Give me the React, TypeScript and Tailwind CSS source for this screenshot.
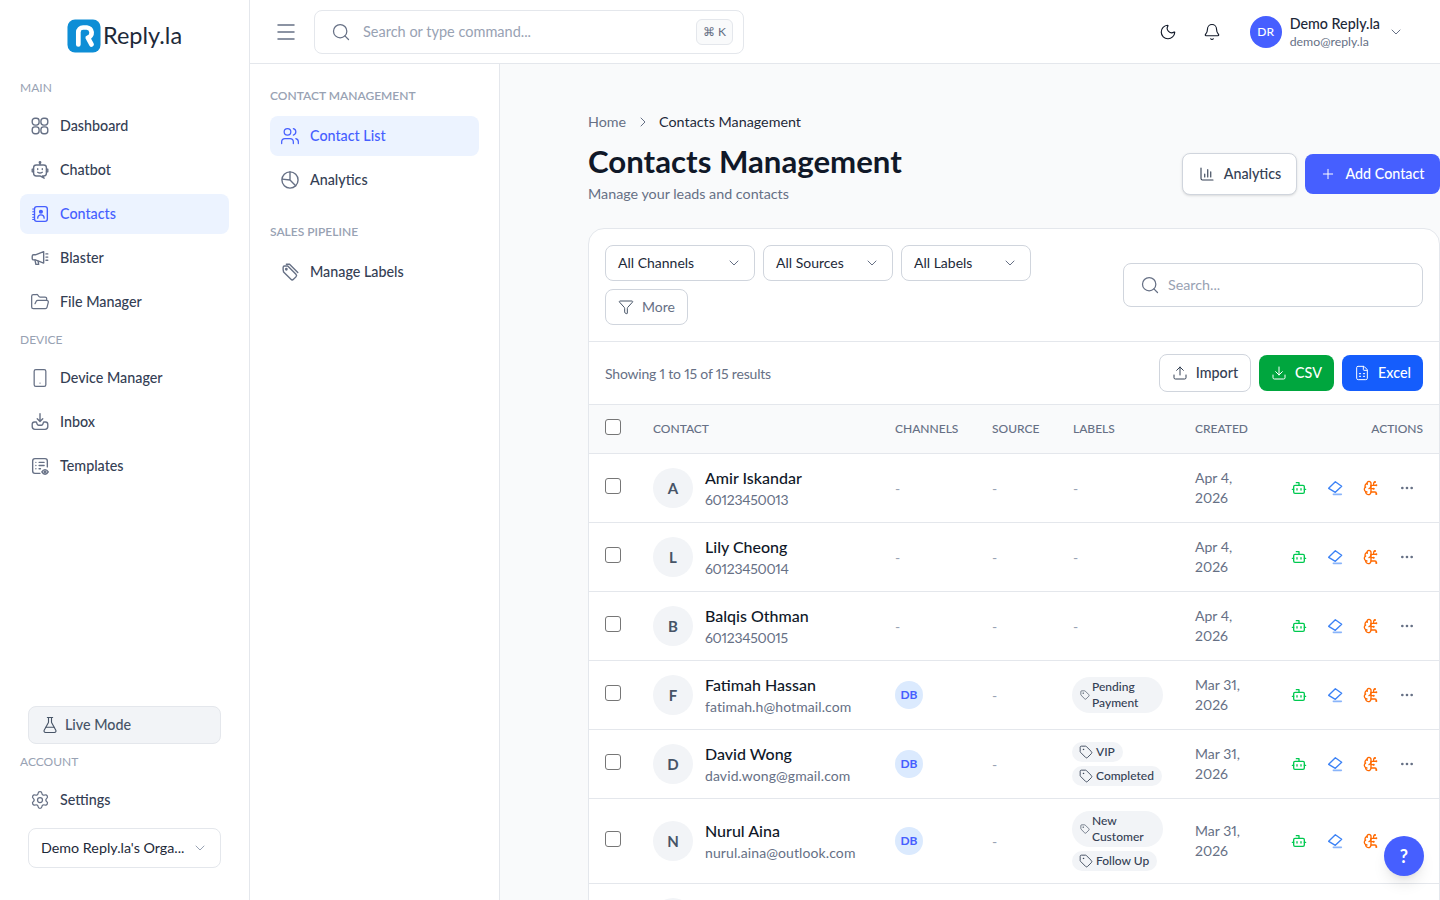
import React from "react";
import {
  Bell, ChevronDown, ChevronRight, Download, Ellipsis, FlaskConical, FolderOpen, Funnel, Menu, Moon, Plus, Search, Settings, Smartphone, Tag, Upload, Users, BrainCircuit, Bot, FileSpreadsheet,
} from "lucide-react";

const Svg = ({ children, className = "" }: { children: React.ReactNode; className?: string }) => (
  <svg viewBox="0 0 24 24" fill="none" stroke="currentColor" strokeWidth="1.5" strokeLinecap="round" strokeLinejoin="round" className={className}>{children}</svg>
);

const DashIcon = (p: { className?: string }) => (
  <Svg {...p}><rect x="3.500" y="3.500" width="7.500" height="7.500" rx="3" /><rect x="13" y="3.500" width="7.500" height="7.500" rx="3" /><rect x="3.500" y="13" width="7.500" height="7.500" rx="3" /><rect x="13" y="13" width="7.500" height="7.500" rx="3" /></Svg>
);
const ChatbotIcon = (p: { className?: string }) => (
  <Svg {...p}><path d="M12 4v2" /><circle cx="12" cy="3.800" r=".8" /><path d="M8 6.500h8a3 3 0 0 1 3 3v6a3 3 0 0 1-3 3h-1.500l2 2.500-4.500-2.500H8a3 3 0 0 1-3-3v-6a3 3 0 0 1 3-3Z" /><path d="M5 11H3.500v3H5M19 11h1.500v3H19" /><path d="M9.500 10.500v1M14.500 10.500v1M9.500 14.500c1.500 1 3.500 1 5 0" /></Svg>
);
const ContactsIcon = (p: { className?: string }) => (
  <Svg {...p}><rect x="6" y="4" width="14" height="16" rx="2.500" /><circle cx="13" cy="9.500" r="1.500" fill="currentColor" /><path d="M9.500 16.500c0-2.200 1.500-3.500 3.500-3.500s3.500 1.300 3.500 3.500" /><path d="M4 6.500h2M4 9.500h2M4 12.500h2M4 15.500h2M4 18h2" strokeWidth="1.200" /></Svg>
);
const BlasterIcon = (p: { className?: string }) => (
  <Svg {...p}><path d="M16 5 7 8.500H5a1.500 1.500 0 0 0-1.500 1.500v2.500A1.500 1.500 0 0 0 5 14h2l9 3.500V5Z" /><path d="M6.500 14l1 5h3l-.5-3.500" /><path d="M18.500 7.500h2M18.500 11h2M18.500 14.500h2" /></Svg>
);
const InboxIcon = (p: { className?: string }) => (
  <Svg {...p}><path d="M12 3v8M9 8.500l3 3 3-3" /><path d="M8 12H6a2.500 2.500 0 0 0-2.500 2.500V17A3 3 0 0 0 6.500 20h11a3 3 0 0 0 3-3v-2.500A2.500 2.500 0 0 0 18 12h-2l-1 2.500a1.500 1.500 0 0 1-1.400 1h-3.200a1.500 1.500 0 0 1-1.400-1L8 12Z" /></Svg>
);
const TemplatesIcon = (p: { className?: string }) => (
  <Svg {...p}><path d="M12 20H6.500A2.500 2.500 0 0 1 4 17.500v-11A2.500 2.500 0 0 1 6.500 4h11A2.500 2.500 0 0 1 20 6.500V13" /><path d="M7.500 8h.01M7.500 11.500h.01M7.500 15h.01M11 8h5.500M11 11.500h5.500M11 15h1.500" /><path d="M14 18.500c1-1.800 2.300-2.500 3.500-2.500s2.500.7 3.500 2.500c-1 1.800-2.300 2.500-3.500 2.500s-2.500-.7-3.500-2.500Z" /><circle cx="17.500" cy="18.500" r="1" /></Svg>
);
const LabelsIcon = (p: { className?: string }) => (
  <Svg {...p}><path d="M4.500 9.500V7a1.500 1.500 0 0 1 1.500-1.500h3.500l9 9a2 2 0 0 1 0 2.800l-2.700 2.700a2 2 0 0 1-2.800 0l-8-8Z" /><path d="M8 3.500h3.500l9 9" /><circle cx="8" cy="9" r=".8" /></Svg>
);
const PieIcon = (p: { className?: string }) => (
  <Svg {...p}><circle cx="12" cy="12" r="8.800" /><path d="M12 3.200V12L3.600 11M12 12l6.200 6.200" /></Svg>
);
const ChartAxesIcon = (p: { className?: string }) => (
  <Svg {...p}><path d="M4 4v14a2 2 0 0 0 2 2h14" /><path d="M9 16v-4M13 16V6M17 16V9" /></Svg>
);
const EraserIcon = (p: { className?: string }) => (
  <svg viewBox="0 0 24 24" fill="none" stroke="currentColor" strokeWidth="2" strokeLinecap="round" strokeLinejoin="round" className={p.className}>
    <path d="M2.500 12.500 12.500 2.500 22 9.500 12.500 18.500Z" />
    <path d="M9.500 21.500h12" strokeWidth="2.400" strokeOpacity=".6" />
  </svg>
);

const Label = ({ children, className = "" }: { children: React.ReactNode; className?: string }) => (
  <div className={`text-[12px] leading-4 uppercase text-[#98a2b3] ${className}`}>{children}</div>
);

const NavItem = ({ icon: I, label, active, small }: { icon: React.ComponentType<{ className?: string; strokeWidth?: number }>; label: string; active?: boolean; small?: boolean }) => (
  <div className={`flex h-10 items-center gap-2 rounded-lg px-2 text-[14.3px] font-medium ${active ? "bg-[#ecf3ff] text-[#465fff]" : "text-[#344054]"}`}>
    <span className="flex w-6 justify-center">
      <I className={`${small ? "h-5 w-5" : "h-[22px] w-[22px]"} ${active ? "text-[#465fff]" : "text-[#667085]"}`} strokeWidth={1.5} />
    </span>
    <span className="pb-px">{label}</span>
  </div>
);

const Select = ({ label, width }: { label: string; width: string }) => (
  <div className={`flex h-9 items-center justify-between rounded-lg border border-[#d0d5dd] bg-white px-3 text-[14px] text-[#1d2939] ${width}`}>
    <span className="pb-0.5">{label}</span>
    <ChevronDown className="h-4 w-4 text-[#667085]" strokeWidth={1.5} />
  </div>
);

type Row = { name: string; sub: string; letter: string; db?: boolean; labels: string[][]; date: [string, string]; tall?: boolean; phone?: boolean };

const rows: Row[] = [
  { name: "Amir Iskandar", sub: "60123450013", phone: true, letter: "A", labels: [], date: ["Apr 4,", "2026"] },
  { name: "Lily Cheong", sub: "60123450014", phone: true, letter: "L", labels: [], date: ["Apr 4,", "2026"] },
  { name: "Balqis Othman", sub: "60123450015", phone: true, letter: "B", labels: [], date: ["Apr 4,", "2026"] },
  { name: "Fatimah Hassan", sub: "fatimah.h@hotmail.com", letter: "F", db: true, labels: [["Pending", "Payment"]], date: ["Mar 31,", "2026"] },
  { name: "David Wong", sub: "david.wong@gmail.com", letter: "D", db: true, labels: [["VIP"], ["Completed"]], date: ["Mar 31,", "2026"] },
  { name: "Nurul Aina", sub: "nurul.aina@outlook.com", letter: "N", db: true, labels: [["New", "Customer"], ["Follow Up"]], date: ["Mar 31,", "2026"], tall: true },
];

const Pill = ({ lines }: { lines: string[] }) => {
  const two = lines.length > 1;
  return two ? (
    <div className="flex w-[91px] items-center gap-0.5 rounded-[18px] bg-[#f2f4f7] px-2 py-0.5 text-[12px] font-medium leading-4 text-[#344054]">
      <Tag className="h-2.5 w-2.5 shrink-0" strokeWidth={1.5} />
      <span>{lines.map((l) => <div key={l}>{l}</div>)}</span>
    </div>
  ) : (
    <div className="flex h-5 w-fit items-center gap-[3px] rounded-full bg-[#f2f4f7] pl-[7px] pr-2 text-[12px] font-medium text-[#344054]">
      <Tag className="h-3.5 w-3.5 shrink-0" strokeWidth={1.5} />
      <span>{lines[0]}</span>
    </div>
  );
};

const Check = () => <div className="h-4 w-4 rounded-[3px] border border-[#767676] bg-white" />;

const grid = "grid grid-cols-[48px_242px_97px_81px_122px_84px_1fr] items-center px-4";

export default function App() {
  const font = { fontFamily: '"Lato", "Open Sans", sans-serif' };
  return (
    <div className="relative flex h-screen w-full overflow-hidden bg-white proportional-nums" style={font}>
      <aside className="flex h-full w-[250px] shrink-0 flex-col border-r border-[#e4e7ec] bg-white">
        <div className="flex h-[72px] items-center justify-center gap-0.5">
          <svg viewBox="0 0 36 36" className="h-[34px] w-[34px]">
            <rect x="0.500" y="0.500" width="35" height="35" rx="8" fill="#0e8ed6" />
            <path d="M12 27V14a5 5 0 0 1 5-5h4a5.500 5.500 0 0 1 1 10.800L26 27" fill="none" stroke="#fff" strokeWidth="5" strokeLinecap="round" strokeLinejoin="round" />
          </svg>
          <span className="pb-0.5 text-[23.5px] leading-8 text-[#1d2939]">Reply.la</span>
        </div>
        <div className="flex flex-1 flex-col px-5">
          <Label className="mt-2">Main</Label>
          <div className="mt-[10px] flex flex-col gap-1">
            <NavItem icon={DashIcon} label="Dashboard" />
            <NavItem icon={ChatbotIcon} label="Chatbot" />
            <NavItem icon={ContactsIcon} label="Contacts" active />
            <NavItem icon={BlasterIcon} label="Blaster" />
            <NavItem icon={FolderOpen} label="File Manager" small />
          </div>
          <Label className="mt-[10px]">Device</Label>
          <div className="mt-[10px] flex flex-col gap-1">
            <NavItem icon={Smartphone} label="Device Manager" small />
            <NavItem icon={InboxIcon} label="Inbox" />
            <NavItem icon={TemplatesIcon} label="Templates" />
          </div>
          <div className="mt-auto pb-8">
            <div className="mx-2 flex h-[38px] items-center gap-1.5 rounded-lg border border-[#e4e7ec] bg-[#f2f4f7] px-3 text-[14.3px] font-medium text-[#475467]">
              <FlaskConical className="h-[18px] w-[18px]" strokeWidth={1.5} />
              <span className="pb-px">Live Mode</span>
            </div>
            <Label className="mt-[10px]">Account</Label>
            <div className="mt-[10px]"><NavItem icon={Settings} label="Settings" small /></div>
            <div className="mx-2 mt-2 flex h-10 items-center justify-between rounded-lg border border-[#e4e7ec] bg-white px-3 text-[14.3px] text-[#1d2939]">
              <span className="pb-px">Demo Reply.la's Orga...</span>
              <ChevronDown className="h-4 w-4 text-[#98a2b3]" strokeWidth={1.5} />
            </div>
          </div>
        </div>
      </aside>

      <div className="flex min-w-0 flex-1 flex-col">
        <header className="flex h-16 shrink-0 items-center border-b border-[#e4e7ec] bg-white pl-6 pr-[36px]">
          <Menu className="h-6 w-6 text-[#667085]" strokeWidth={1.5} />
          <div className="ml-[16px] flex h-11 w-[430px] items-center rounded-lg border border-[#e4e7ec] bg-white pl-4 pr-[10px]">
            <Search className="h-[20px] w-[20px] text-[#667085]" strokeWidth={1.5} />
            <span className="ml-3 text-[14.5px] text-[#98a2b3]">Search or type command...</span>
            <span className="ml-auto flex h-[26px] w-[37px] items-center justify-center rounded-md border border-[#e4e7ec] bg-[#f9fafb] text-[12px] text-[#667085]">⌘ K</span>
          </div>
          <div className="ml-auto flex items-center">
            <Moon className="h-[18px] w-[18px] text-[#101828]" strokeWidth={1.5} />
            <Bell className="ml-[26px] h-[18px] w-[18px] text-[#101828]" strokeWidth={1.5} />
            <div className="ml-[29px] flex h-8 w-8 items-center justify-center rounded-full bg-[#465fff] text-[12px] font-medium text-white">DR</div>
            <div className="ml-2 flex flex-col pt-0.5">
              <span className="text-[14.3px] font-medium leading-[18px] text-[#1d2939]">Demo Reply.la</span>
              <span className="mt-px text-[12.3px] leading-4 text-[#667085]">demo@reply.la</span>
            </div>
            <ChevronDown className="ml-[8px] h-4 w-4 text-[#667085]" strokeWidth={1.5} />
          </div>
        </header>

        <div className="flex min-h-0 flex-1">
          <nav className="w-[250px] shrink-0 border-r border-[#e4e7ec] bg-white px-5 pt-6">
            <Label className="font-semibold">Contact Management</Label>
            <div className="mt-3 flex flex-col gap-1">
              <NavItem icon={Users} label="Contact List" active small />
              <NavItem icon={PieIcon} label="Analytics" />
            </div>
            <Label className="mt-[24px] font-semibold">Sales Pipeline</Label>
            <div className="mt-3"><NavItem icon={LabelsIcon} label="Manage Labels" /></div>
          </nav>

          <main className="min-w-0 flex-1 overflow-hidden bg-[#f9fafb] pl-[88px] pt-[48px]">
            <div className="flex items-center text-[14.3px] leading-5">
              <span className="text-[#667085]">Home</span>
              <ChevronRight className="ml-[9px] h-4 w-4 text-[#667085]" strokeWidth={1.5} />
              <span className="ml-[8px] text-[#1d2939]">Contacts Management</span>
            </div>
            <div className="mt-[11px] flex items-end justify-between">
              <div>
                <h1 className="text-[31.2px] font-bold leading-9 text-[#101828]">Contacts Management</h1>
                <p className="mt-[5px] text-[14.3px] leading-5 text-[#667085]">Manage your leads and contacts</p>
              </div>
              <div className="mb-[9px] flex items-center gap-2">
                <div className="flex h-[42px] w-[115px] items-center justify-center gap-2 rounded-lg border border-[#d0d5dd] bg-white text-[14.3px] font-medium text-[#344054] shadow-sm">
                  <ChartAxesIcon className="h-[18px] w-[18px]" />
                  Analytics
                </div>
                <div className="flex h-10 w-[135px] items-center justify-center gap-[9px] rounded-lg bg-[#465fff] text-[14.3px] font-medium text-white">
                  <Plus className="h-4 w-4" strokeWidth={1.5} />
                  Add Contact
                </div>
              </div>
            </div>

            <section className="mt-[24px] w-[852px] rounded-t-2xl border border-[#e4e7ec] bg-white">
              <div className="flex items-center justify-between border-b border-[#e4e7ec] p-4">
                <div className="flex w-[440px] flex-wrap gap-2">
                  <Select label="All Channels" width="w-[150px]" />
                  <Select label="All Sources" width="w-[130px]" />
                  <Select label="All Labels" width="w-[130px]" />
                  <div className="flex h-9 w-[83px] items-center gap-2 rounded-lg border border-[#d0d5dd] bg-white px-3 text-[14px] text-[#667085]">
                    <Funnel className="h-4 w-4 text-[#475467]" strokeWidth={1.5} />
                    <span className="pb-0.5">More</span>
                  </div>
                </div>
                <div className="flex h-11 w-[300px] items-center rounded-lg border border-[#d0d5dd] bg-white pl-4 pr-4">
                  <Search className="h-5 w-5 text-[#667085]" strokeWidth={1.5} />
                  <span className="ml-2 pb-px text-[14.3px] text-[#98a2b3]">Search...</span>
                </div>
              </div>

              <div className="flex h-[62px] items-center justify-between px-4">
                <span className="text-[14px] tracking-[-0.2px] text-[#667085]">Showing 1 to 15 of 15 results</span>
                <div className="flex items-center gap-2">
                  <div className="flex h-[38px] w-[92px] items-center justify-center gap-2 rounded-lg border border-[#d0d5dd] bg-white text-[14.3px] font-medium text-[#344054]">
                    <Upload className="h-4 w-4" strokeWidth={1.5} />Import
                  </div>
                  <div className="flex h-9 w-[75px] items-center justify-center gap-2 rounded-lg bg-[#00a63e] text-[14.3px] font-medium text-white">
                    <Download className="h-4 w-4" strokeWidth={1.5} />CSV
                  </div>
                  <div className="flex h-9 w-[81px] items-center justify-center gap-2 rounded-lg bg-[#155dfc] text-[14.3px] font-medium text-white">
                    <FileSpreadsheet className="h-4 w-4" strokeWidth={1.5} />Excel
                  </div>
                </div>
              </div>

              <div className={`${grid} h-[50px] border-y border-[#e4e7ec] bg-[#f9fafb] text-[12px] font-medium uppercase leading-4 text-[#667085]`}>
                <div className="-mt-1"><Check /></div>
                <div>Contact</div>
                <div>Channels</div>
                <div>Source</div>
                <div>Labels</div>
                <div>Created</div>
                <div className="text-right">Actions</div>
              </div>

              {rows.map((r) => (
                <div key={r.name} className={`${grid} border-b border-[#e4e7ec] ${r.tall ? "h-[85px]" : "h-[69px]"}`}>
                  <div className="-mt-1"><Check /></div>
                  <div className="flex items-center gap-3">
                    <div className="flex h-10 w-10 items-center justify-center rounded-full bg-[#f2f4f7] text-[15px] font-bold text-[#475467]">{r.letter}</div>
                    <div>
                      <div className="text-[16px] font-medium leading-[22px] text-[#101828]">{r.name}</div>
                      <div className={`mt-px text-[14px] leading-5 text-[#667085] ${r.phone ? "tracking-[-0.3px]" : "tracking-[0.1px]"}`}>{r.sub}</div>
                    </div>
                  </div>
                  <div>
                    {r.db ? <div className="flex h-7 w-7 items-center justify-center rounded-full bg-[#dbeafe] text-[12px] font-bold text-[#465fff]">DB</div> : <span className="text-[14px] text-[#98a2b3]">-</span>}
                  </div>
                  <div className="text-[14px] text-[#98a2b3]">-</div>
                  <div className="-ml-px flex flex-col gap-1">
                    {r.labels.length ? r.labels.map((l) => <Pill key={l[0]} lines={l} />) : <span className="ml-px text-[14px] text-[#98a2b3]">-</span>}
                  </div>
                  <div className="text-[14px] leading-5 text-[#667085]">{r.date[0]}<br />{r.date[1]}</div>
                  <div className="flex items-center justify-end gap-5 pr-2">
                    <Bot className="h-4 w-4 text-[#00c950]" strokeWidth={2} />
                    <EraserIcon className="h-4 w-4 text-[#3b82f6]" />
                    <BrainCircuit className="h-4 w-4 text-[#ff6900]" strokeWidth={2} />
                    <Ellipsis className="h-4 w-4 text-[#667085]" strokeWidth={2} />
                  </div>
                </div>
              ))}
              <div className="flex h-12 px-4 pt-[14px]"><div className="ml-12 h-10 w-10 rounded-full bg-[#f2f4f7]" /></div>
            </section>
          </main>
        </div>
      </div>

      <div className="absolute left-[1384px] top-[836px] flex h-10 w-10 items-center justify-center rounded-full bg-[#465fff] text-[18px] font-bold text-white shadow-lg">?</div>
    </div>
  );
}
